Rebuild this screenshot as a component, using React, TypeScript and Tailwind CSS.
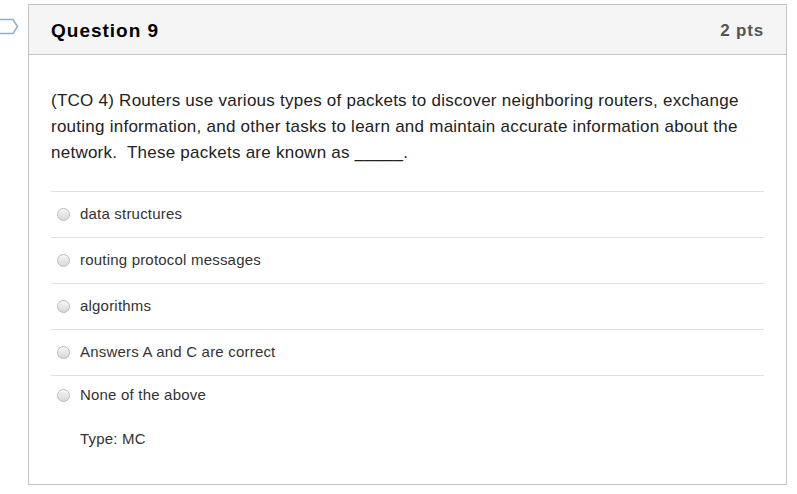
import React from 'react';

const options = [
	'data structures',
	'routing protocol messages',
	'algorithms',
	'Answers A and C are correct',
	'None of the above',
];

const Radio = () => (
	<span className="inline-block w-[13px] h-[13px] rounded-full border border-[#b9b9b9] bg-gradient-to-b from-[#f4f4f4] to-[#d9d9d9] shadow-[inset_0_1px_1px_rgba(255,255,255,0.8)]" />
);

export default function App() {
	return (
		<div
			className="w-[797px] h-[494px] bg-white relative"
			style={{ fontFamily: '"Liberation Sans", Arial, sans-serif' }}
		>
			<svg
				className="absolute left-0 top-[18px]"
				width="19"
				height="17"
				viewBox="0 0 19 17"
			>
				<path
					d="M-2 1.5 H13 L17.5 8.5 L13 15.5 H-2"
					fill="white"
					stroke="#8fb0cc"
					strokeWidth="1.5"
				/>
			</svg>
			<div className="pt-[4px] pl-[28px]">
				<div className="w-[759px] h-[481px] border border-[#c4c4c4] flex flex-col">
					<div className="h-[50px] bg-[#f5f5f5] border-b border-[#c4c4c4] flex items-center justify-between px-[22px] pt-[3px]">
						<span className="text-[19px] font-bold text-[#000] tracking-[1px]">Question 9</span>
						<span className="text-[17px] font-bold text-[#555] tracking-[0.8px]">2 pts</span>
					</div>
					<div className="px-[22px] pt-[33px]">
						<p className="text-[17px] leading-[26px] text-[#222] tracking-[0.25px]">
							(TCO 4) Routers use various types of packets to discover neighboring routers, exchange routing information, and other tasks to learn and maintain accurate information about the network.&nbsp; These packets are known as _____.
						</p>
						<div className="mt-[25px]">
							{options.map((o, i) => (
								<div
									key={o}
									className={`border-t border-[#e2e2e2] flex items-center ${i === options.length - 1 ? 'h-[40px]' : 'h-[46px]'}`}
								>
									<div className="w-[29px] pl-[6px] flex items-center">
										<Radio />
									</div>
									<span className="text-[15px] text-[#333] tracking-[0.2px]">{o}</span>
								</div>
							))}
							<div className="pl-[29px] pt-[13px] text-[15px] text-[#333] tracking-[0.2px]">Type: MC</div>
						</div>
					</div>
				</div>
			</div>
		</div>
	);
}
